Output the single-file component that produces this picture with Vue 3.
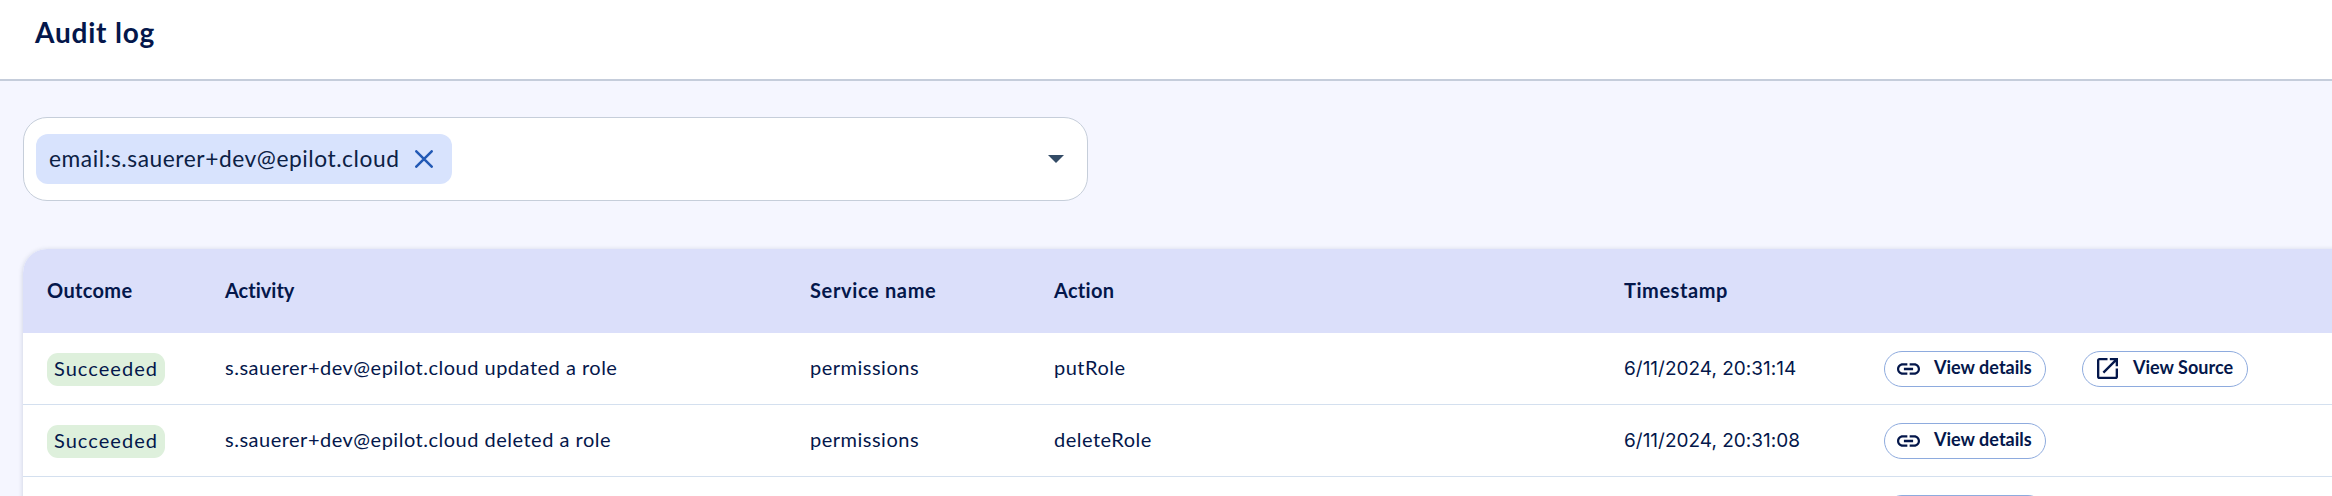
<script setup>
const columns = [
  { key: 'outcome', label: 'Outcome' },
  { key: 'activity', label: 'Activity' },
  { key: 'service', label: 'Service name' },
  { key: 'action', label: 'Action' },
  { key: 'time', label: 'Timestamp' },
]

const rows = [
  { id: 1, outcome: 'Succeeded', activity: 's.sauerer+dev@epilot.cloud updated a role', service: 'permissions', action: 'putRole', time: '6/11/2024, 20:31:14', source: true },
  { id: 2, outcome: 'Succeeded', activity: 's.sauerer+dev@epilot.cloud deleted a role', service: 'permissions', action: 'deleteRole', time: '6/11/2024, 20:31:08', source: false },
  { id: 3, outcome: '', activity: '', service: '', action: '', time: '', source: false },
]
</script>

<template>
  <div class="page">
    <header class="topbar">
      <h1>Audit log</h1>
    </header>

    <main>
      <div class="filter">
        <span class="chip">
          <span class="chip-text">email:s.sauerer+dev@epilot.cloud</span>
          <svg class="close" viewBox="0 0 18 18"><path d="M1.3 1.3 16.7 16.7M16.7 1.3 1.3 16.7" /></svg>
        </span>
        <svg class="caret" viewBox="0 0 16 8"><path d="M0 0h16L8 8z" /></svg>
      </div>

      <section class="table">
        <div class="row head">
          <span v-for="c in columns" :key="c.key" :class="['th', 'th-' + c.key]">{{ c.label }}</span>
        </div>
        <div v-for="r in rows" :key="r.id" class="row">
          <span class="cell">
            <span v-if="r.outcome" class="badge">{{ r.outcome }}</span>
          </span>
          <span class="cell text">{{ r.activity }}</span>
          <span class="cell text">{{ r.service }}</span>
          <span class="cell text">{{ r.action }}</span>
          <span class="cell text time">{{ r.time }}</span>
          <span class="cell actions">
            <button type="button" class="btn">
              <svg class="link" viewBox="2 7 20 10"><path d="M3.9 12c0-1.71 1.39-3.1 3.1-3.1h4V7H7c-2.76 0-5 2.24-5 5s2.24 5 5 5h4v-1.9H7c-1.71 0-3.1-1.39-3.1-3.1zM8 13h8v-2H8v2zm9-6h-4v1.9h4c1.71 0 3.1 1.39 3.1 3.1s-1.39 3.1-3.1 3.1h-4V17h4c2.76 0 5-2.24 5-5s-2.24-5-5-5z" /></svg>
              <span v-if="r.outcome">View details</span>
            </button>
            <button v-if="r.source" type="button" class="btn source">
              <svg class="open" viewBox="3 3 18 18"><path d="M19 19H5V5h7V3H5c-1.11 0-2 .9-2 2v14c0 1.1.89 2 2 2h14c1.1 0 2-.9 2-2v-7h-2v7zM14 3v2h3.59l-9.83 9.83 1.41 1.41L19 6.41V10h2V3h-7z" /></svg>
              <span>View Source</span>
            </button>
          </span>
        </div>
      </section>
    </main>
  </div>
</template>

<style>
html,
body {
  overflow: hidden;
}
</style>

<style scoped>
.page {
  width: 2332px;
  height: 496px;
  overflow: hidden;
  background: #f5f6ff;
  color: #04174b;
  font-family: Lato, "Liberation Sans", sans-serif;
  font-size: 20px;
  font-variant-ligatures: none;
}
.topbar {
  box-sizing: border-box;
  height: 81px;
  padding: 15px 35px 0;
  background: #fff;
  border-bottom: 2px solid #c5cddb;
}
h1 {
  margin: 0;
  font-size: 28px;
  line-height: 34px;
  font-weight: 700;
  letter-spacing: 0.8px;
}
main {
  padding: 36px 0 0 23px;
}
.filter {
  box-sizing: border-box;
  width: 1065px;
  height: 84px;
  padding: 0 23px 0 12px;
  display: flex;
  align-items: center;
  justify-content: space-between;
  background: #fff;
  border: 1px solid #c6ceda;
  border-radius: 24px;
}
.chip {
  box-sizing: border-box;
  display: flex;
  align-items: center;
  width: 416px;
  height: 50px;
  padding: 0 19px 0 13px;
  justify-content: space-between;
  background: #d8e3fd;
  border-radius: 12px;
}
.chip-text {
  padding-bottom: 2px;
  font-size: 22.75px;
  letter-spacing: 0.56px;
  white-space: nowrap;
  color: #0c2145;
}
.close {
  width: 18px;
  height: 18px;
  fill: none;
  stroke: #2259b5;
  stroke-width: 2.5;
  stroke-linecap: round;
}
.caret {
  width: 16px;
  height: 8px;
  fill: #334b66;
}
.table {
  width: 2400px;
  margin: 48px 0 0;
  background: #fff;
  border-radius: 24px 0 0 0;
  box-shadow: 0 1px 5px rgba(30, 50, 90, 0.2);
}
.row {
  box-sizing: border-box;
  height: 72px;
  padding-left: 24px;
  display: grid;
  grid-template-columns: 178px 585px 244px 570px 260px 1fr;
  align-items: center;
  border-bottom: 1px solid #d4e0ef;
}
.head {
  height: 84px;
  background: #dbdffa;
  border: 0;
  border-radius: 24px 0 0 0;
}
.th {
  padding-bottom: 2px;
  font-weight: 700;
}
.th-outcome {
  letter-spacing: 0.35px;
}
.th-service {
  letter-spacing: 0.65px;
}
.th-action {
  letter-spacing: 0.3px;
}
.th-time {
  letter-spacing: 0.55px;
}
.cell {
  display: flex;
  white-space: nowrap;
}
.text {
  padding-bottom: 3px;
  letter-spacing: 0.5px;
}
.time {
  padding-bottom: 1px;
  font-family: Inter, "Liberation Sans", sans-serif;
  font-size: 19px;
  letter-spacing: 0;
}
.badge {
  box-sizing: border-box;
  width: 118px;
  height: 33px;
  margin-top: 1px;
  line-height: 31px;
  text-align: center;
  letter-spacing: 1.05px;
  background: #def0dc;
  border-radius: 11px;
}
.actions {
  gap: 36px;
}
.btn {
  box-sizing: border-box;
  display: flex;
  align-items: center;
  width: 162px;
  height: 36px;
  margin: 1px 0 0;
  padding: 0 0 0 12px;
  background: #fff;
  border: 1px solid #8eabde;
  border-radius: 18px;
  color: inherit;
  font: 700 18px/22px Lato, "Liberation Sans", sans-serif;
  font-variant-ligatures: none;
  letter-spacing: 0.02px;
  white-space: nowrap;
}
.btn span {
  margin-left: 14px;
  padding-bottom: 4px;
}
.btn svg {
  flex: none;
  fill: #04174b;
}
.link {
  width: 23px;
  height: 12px;
  margin-top: -1px;
}
.source {
  width: 166px;
  padding-left: 14px;
}
.open {
  width: 21px;
  height: 21px;
  margin-top: -1px;
}
.source span {
  margin-left: 15px;
}
</style>
